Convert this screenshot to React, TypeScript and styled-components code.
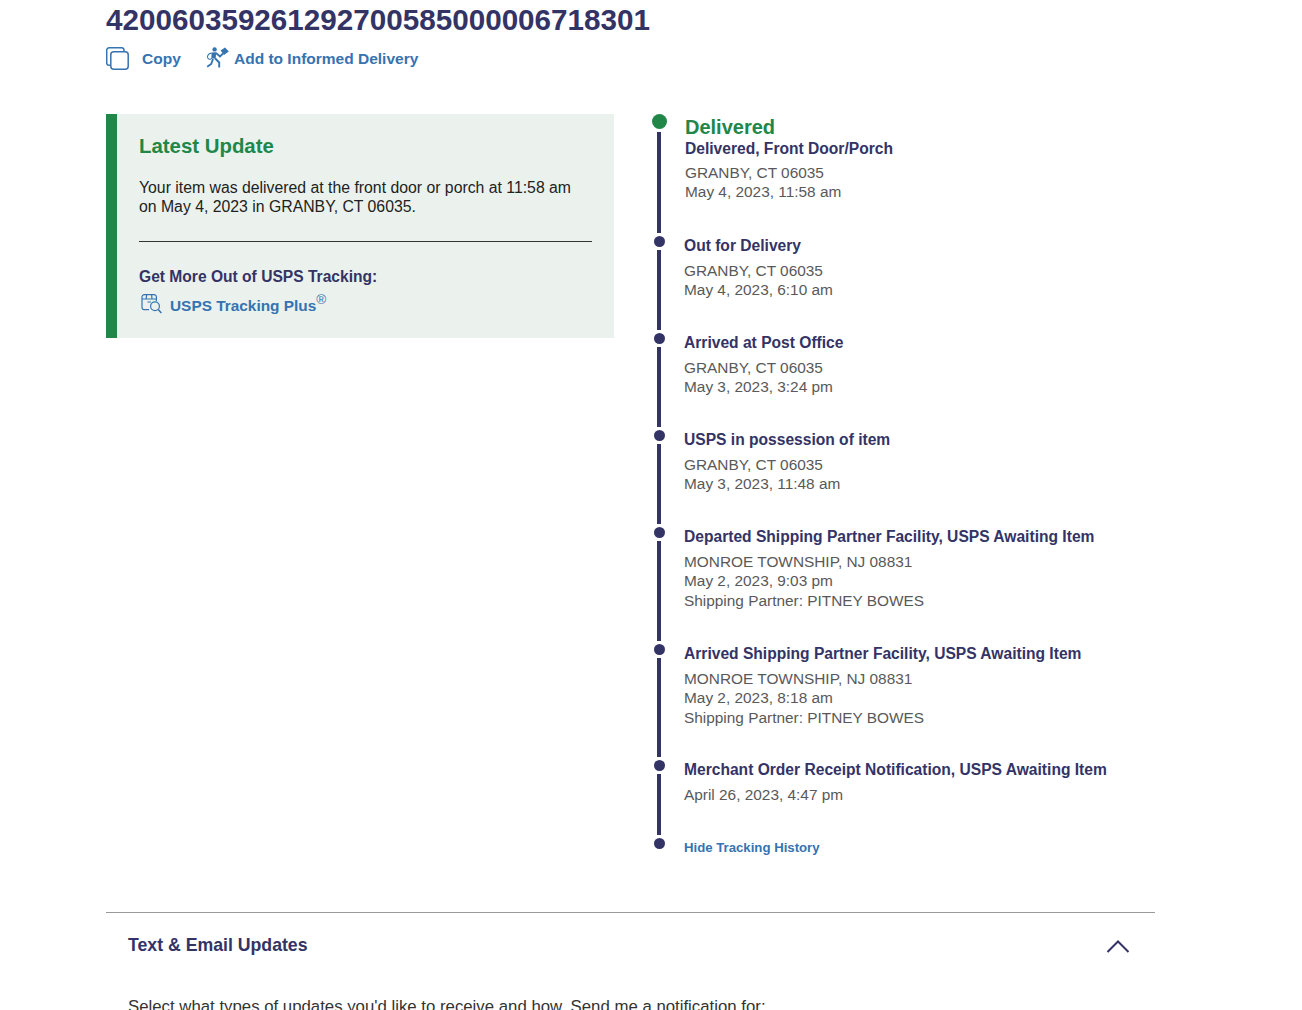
import React from 'react'
import styled, { createGlobalStyle } from 'styled-components'

const NAVY = '#333366'
const BLUE = '#3573b1'
const GREEN = '#218748'
const GREY = '#595959'

const GlobalStyle = createGlobalStyle`
  html, body {
    margin: 0;
    padding: 0;
    background: #fff;
    font-family: 'Liberation Sans', Arial, sans-serif;
  }
  body {
    height: 1010px;
    overflow: hidden;
  }
`

const Page = styled.div`
  width: 1049px;
  margin-left: 106px;
`

const TrackingNumber = styled.h1`
  margin: 0;
  padding-top: 3px;
  font-size: 29.65px;
  line-height: 34px;
  font-weight: 700;
  color: ${NAVY};
`

const Actions = styled.div`
  display: flex;
  align-items: center;
  height: 30px;
  margin-top: 6px;
`

const ActionLink = styled.a<{ $gap: number; $width?: number }>`
  display: flex;
  align-items: center;
  gap: ${({ $gap }) => $gap}px;
  width: ${({ $width }) => ($width ? `${$width}px` : 'auto')};
  color: ${BLUE};
  font-size: 15.5px;
  font-weight: 700;
  text-decoration: none;
  span {
    padding-top: 2px;
  }
`

const Columns = styled.div`
  display: flex;
  align-items: flex-start;
  margin-top: 41px;
`

const UpdatePanel = styled.section`
  box-sizing: border-box;
  width: 508px;
  height: 224px;
  padding: 20px 22px 0 22px;
  border-left: 11px solid ${GREEN};
  background: #ebf2ed;
  color: #222;
`

const PanelTitle = styled.h2`
  margin: 0;
  font-size: 20.4px;
  line-height: 25px;
  font-weight: 700;
  color: ${GREEN};
`

const PanelText = styled.p`
  margin: 19px 0 0;
  font-size: 15.8px;
  line-height: 19px;
`

const Rule = styled.hr`
  margin: 25px 0 0;
  border: 0;
  border-top: 1px solid #333;
`

const MoreLabel = styled.div`
  margin-top: 25px;
  font-size: 15.6px;
  line-height: 19px;
  font-weight: 700;
  color: ${NAVY};
`

const PlusLink = styled.a`
  display: flex;
  align-items: center;
  gap: 8px;
  margin-top: 7px;
  margin-left: 2px;
  color: ${BLUE};
  font-size: 15.4px;
  font-weight: 700;
  text-decoration: none;
  span {
    padding-top: 4px;
  }
  sup {
    font-size: 13.5px;
    line-height: 0;
    font-weight: 400;
    position: relative;
    top: -1px;
    vertical-align: super;
  }
`

const Timeline = styled.div`
  margin-left: 38px;
  width: 497px;
`

const Step = styled.div<{ $height: number }>`
  display: flex;
  height: ${({ $height }) => $height}px;
`

const Rail = styled.div`
  display: flex;
  flex-direction: column;
  align-items: center;
  width: 15px;
  flex: none;
`

const Dot = styled.span<{ $current?: boolean }>`
  flex: none;
  width: ${({ $current }) => ($current ? 15 : 11)}px;
  height: ${({ $current }) => ($current ? 15 : 11)}px;
  border-radius: 50%;
  background: ${({ $current }) => ($current ? GREEN : NAVY)};
`

const Line = styled.span`
  flex: 1;
  width: 4px;
  margin: 3px 1px 3px 0;
  background: ${NAVY};
`

const StepBody = styled.div<{ $current?: boolean }>`
  margin-left: ${({ $current }) => ($current ? 18 : 17)}px;
  padding-top: ${({ $current }) => ($current ? 1 : 0)}px;
`

const CurrentStatus = styled.div`
  font-size: 20px;
  line-height: 24px;
  font-weight: 700;
  color: ${GREEN};
`

const StepTitle = styled.div<{ $current?: boolean }>`
  margin-bottom: ${({ $current }) => ($current ? 4.5 : 6)}px;
  font-size: 15.6px;
  line-height: 19px;
  font-weight: 700;
  color: ${NAVY};
`

const StepDetail = styled.div`
  font-size: 15.4px;
  line-height: 19.4px;
  color: ${GREY};
`

const HideLink = styled.a`
  display: block;
  padding-top: 2px;
  margin-left: 17px;
  color: ${BLUE};
  font-size: 13.2px;
  line-height: 16px;
  font-weight: 700;
  text-decoration: none;
`

const Accordion = styled.section`
  margin-top: 58px;
  border-top: 1px solid #999;
  padding: 22px 25px 0 22px;
`

const AccordionHeader = styled.div`
  display: flex;
  align-items: center;
  justify-content: space-between;
  height: 21px;
`

const AccordionTitle = styled.h3`
  margin: 0;
  font-size: 17.7px;
  line-height: 21px;
  font-weight: 700;
  color: ${NAVY};
`

const AccordionText = styled.p`
  margin: 41px 0 0;
  font-size: 16.8px;
  line-height: 19px;
  font-weight: 400;
  color: #333;
`

type Event = { title: string; lines: string[]; height: number }

const events: Event[] = [
  { title: 'Out for Delivery', lines: ['GRANBY, CT 06035', 'May 4, 2023, 6:10 am'], height: 97 },
  { title: 'Arrived at Post Office', lines: ['GRANBY, CT 06035', 'May 3, 2023, 3:24 pm'], height: 97 },
  { title: 'USPS in possession of item', lines: ['GRANBY, CT 06035', 'May 3, 2023, 11:48 am'], height: 97 },
  {
    title: 'Departed Shipping Partner Facility, USPS Awaiting Item',
    lines: ['MONROE TOWNSHIP, NJ 08831', 'May 2, 2023, 9:03 pm', 'Shipping Partner: PITNEY BOWES'],
    height: 117,
  },
  {
    title: 'Arrived Shipping Partner Facility, USPS Awaiting Item',
    lines: ['MONROE TOWNSHIP, NJ 08831', 'May 2, 2023, 8:18 am', 'Shipping Partner: PITNEY BOWES'],
    height: 116,
  },
  { title: 'Merchant Order Receipt Notification, USPS Awaiting Item', lines: ['April 26, 2023, 4:47 pm'], height: 78 },
]

const CopyIcon = () => (
  <svg width="23" height="23" viewBox="0 0 23 23" fill="none" stroke={BLUE} strokeWidth="1.5">
    <path d="M4 18.3 H3 a2.4 2.4 0 0 1 -2.3 -2.4 V3 A2.4 2.4 0 0 1 3 .8 H15.5 A2.4 2.4 0 0 1 18 3 V4.5" />
    <rect x="4.8" y="4.8" width="17.4" height="17.4" rx="3" />
  </svg>
)

const CarrierIcon = () => (
  <svg width="23" height="22" viewBox="0 0 23 22" fill="none" stroke={BLUE}>
    <circle cx="8.6" cy="2.4" r="2.2" fill={BLUE} stroke="none" />
    <path d="M5.6 5.6 L10.2 5.2 L9.6 12 L5.4 11 Z" fill={BLUE} stroke="none" />
    <path d="M10 6 L14 9.5 L17 6.5" strokeWidth="1.8" />
    <path d="M5.8 6 C1.5 6.5 .6 10 2.2 11.6 C3.4 12.8 5.2 12.2 6.2 11" strokeWidth="1.1" />
    <path d="M9.2 11.5 L13.2 15.5 L13.2 20.6" strokeWidth="1.9" />
    <path d="M7 12 L5.2 17 L1.2 19.8" strokeWidth="1.9" />
    <path d="M14.6 3.6 L19 .4 L22.8 4.4 L18 8 Z" fill={BLUE} stroke="none" />
  </svg>
)

const PlusIcon = () => (
  <svg width="21" height="20" viewBox="0 0 21 20" fill="none" stroke={BLUE} strokeWidth="1.2">
    <path d="M8 15.6 H3 a2 2 0 0 1 -2 -2 V3 a2.4 2.4 0 0 1 2.4 -2.4 H13 a2.4 2.4 0 0 1 2.4 2.4 V7" />
    <path d="M1 5 H15.4 M5.6 .6 L5.2 5 M10.6 .6 L11 5 M6.4 8 H10" />
    <circle cx="14" cy="12.2" r="4.4" />
    <path d="M17.2 15.4 L20.4 19" strokeWidth="1.5" />
  </svg>
)

const ChevronUp = () => (
  <svg width="24" height="14" viewBox="0 0 24 14" fill="none" stroke={NAVY} strokeWidth="2">
    <path d="M1.5 13 L12 2.5 L22.5 13" />
  </svg>
)

const App = () => (
  <Page>
    <GlobalStyle />
    <TrackingNumber>420060359261292700585000006718301</TrackingNumber>
    <Actions>
      <ActionLink href="#" $gap={13} $width={100}>
        <CopyIcon />
        <span>Copy</span>
      </ActionLink>
      <ActionLink href="#" $gap={5}>
        <CarrierIcon />
        <span>Add to Informed Delivery</span>
      </ActionLink>
    </Actions>
    <Columns>
      <UpdatePanel>
        <PanelTitle>Latest Update</PanelTitle>
        <PanelText>
          Your item was delivered at the front door or porch at 11:58 am
          <br />
          on May 4, 2023 in GRANBY, CT 06035.
        </PanelText>
        <Rule />
        <MoreLabel>Get More Out of USPS Tracking:</MoreLabel>
        <PlusLink href="#">
          <PlusIcon />
          <span>
            USPS Tracking Plus<sup>®</sup>
          </span>
        </PlusLink>
      </UpdatePanel>
      <Timeline>
        <Step $height={122}>
          <Rail>
            <Dot $current />
            <Line />
          </Rail>
          <StepBody $current>
            <CurrentStatus>Delivered</CurrentStatus>
            <StepTitle $current>Delivered, Front Door/Porch</StepTitle>
            <StepDetail>
              GRANBY, CT 06035
              <br />
              May 4, 2023, 11:58 am
            </StepDetail>
          </StepBody>
        </Step>
        {events.map((event) => (
          <Step key={event.title} $height={event.height}>
            <Rail>
              <Dot />
              <Line />
            </Rail>
            <StepBody>
              <StepTitle>{event.title}</StepTitle>
              {event.lines.map((line) => (
                <StepDetail key={line}>{line}</StepDetail>
              ))}
            </StepBody>
          </Step>
        ))}
        <Step $height={16}>
          <Rail>
            <Dot />
          </Rail>
          <HideLink href="#">Hide Tracking History</HideLink>
        </Step>
      </Timeline>
    </Columns>
    <Accordion>
      <AccordionHeader>
        <AccordionTitle>Text &amp; Email Updates</AccordionTitle>
        <ChevronUp />
      </AccordionHeader>
      <AccordionText>Select what types of updates you'd like to receive and how. Send me a notification for:</AccordionText>
    </Accordion>
  </Page>
)

export default App
